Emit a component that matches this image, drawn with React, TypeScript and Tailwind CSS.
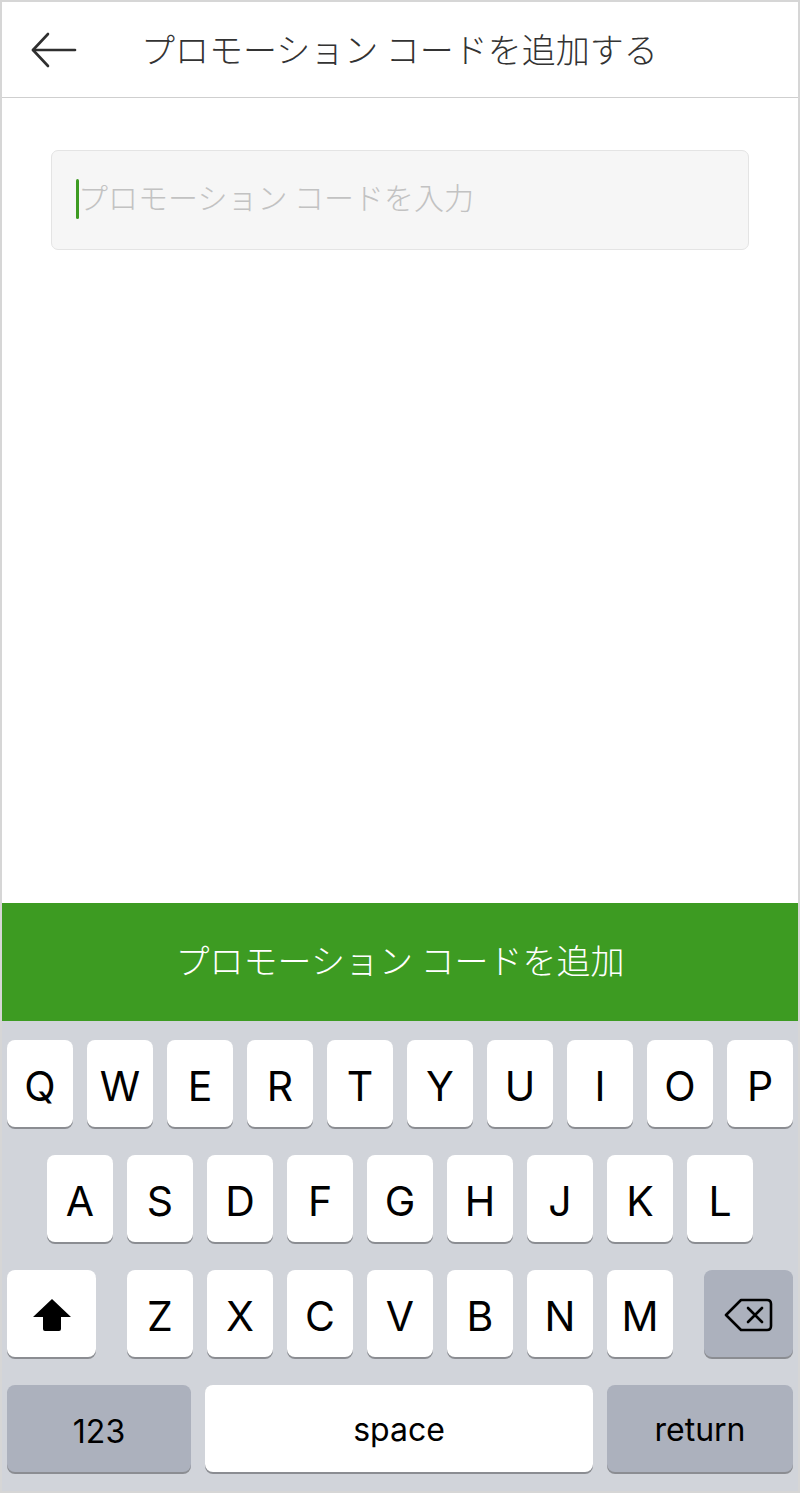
import React from "react";

const jp = { fontFamily: '"Noto Sans CJK JP", "Noto Sans", sans-serif' };
const latin = { fontFamily: 'Inter, "Liberation Sans", sans-serif' };

function Key({ label, className = "" }: { label: string; className?: string }) {
  return (
    <div
      className={`h-[87px] w-[66px] rounded-[8px] bg-white shadow-[0_2px_0_#8b8d92] flex items-center justify-center text-[41px] text-black pt-[6px] ${className}`}
      style={latin}
    >
      {label}
    </div>
  );
}

export default function App() {
  const row1 = ["Q", "W", "E", "R", "T", "Y", "U", "I", "O", "P"];
  const row2 = ["A", "S", "D", "F", "G", "H", "J", "K", "L"];
  const row3 = ["Z", "X", "C", "V", "B", "N", "M"];
  return (
    <div className="w-[800px] h-[1493px] border-2 border-[#d6d6d6] flex flex-col bg-white overflow-hidden">
      {/* Header */}
      <div className="h-[96px] shrink-0 border-b border-[#cfcfcf] flex items-center">
        <div className="w-[139px] pl-[28px] flex items-center">
          <svg width="48" height="38" viewBox="0 0 48 38" fill="none" stroke="#2f2f2f" strokeWidth="2.6" strokeLinecap="round" strokeLinejoin="round">
            <path d="M3 19 H45" />
            <path d="M18 3 L3 19 L18 35" />
          </svg>
        </div>
        <div className="text-[34px] text-[#333] font-light pb-[2px]" style={jp}>
          プロモーション コードを追加する
        </div>
      </div>

      {/* Body */}
      <div className="flex-1 px-[49px] pt-[52px]">
        <div className="h-[100px] rounded-[7px] border border-[#e4e4e4] bg-[#f6f6f6] flex items-center pl-[24px]">
          <div className="w-[3px] h-[40px] rounded-full bg-[#3d9b22] -mt-[2px]" />
          <div className="text-[30px] text-[#c2c2c2] font-light -ml-[1px] pb-[8px]" style={jp}>
            プロモーション コードを入力
          </div>
        </div>
      </div>

      {/* Button */}
      <div className="h-[118px] shrink-0 bg-[#3d9b22] flex items-center justify-center">
        <div className="text-[34px] text-white font-light pb-[5px]" style={jp}>
          プロモーション コードを追加
        </div>
      </div>

      {/* Keyboard */}
      <div className="h-[470px] shrink-0 bg-[#d1d4da] px-[5px] pt-[19px] flex flex-col gap-[28px]">
        <div className="flex gap-[14px]">
          {row1.map((k) => (
            <Key key={k} label={k} />
          ))}
        </div>
        <div className="flex gap-[14px] pl-[40px]">
          {row2.map((k) => (
            <Key key={k} label={k} />
          ))}
        </div>
        <div className="flex">
          <div className="h-[87px] w-[89px] rounded-[8px] bg-white shadow-[0_2px_0_#8b8d92] flex items-center justify-center pt-[2px]">
            <svg width="42" height="36" viewBox="0 0 42 36">
              <path d="M21 2 L40 20 H30 V32 Q30 34 28 34 H14 Q12 34 12 32 V20 H2 Z" fill="#000" />
            </svg>
          </div>
          <div className="flex gap-[14px] ml-[31px]">
            {row3.map((k) => (
              <Key key={k} label={k} />
            ))}
          </div>
          <div className="ml-[31px] h-[87px] w-[89px] rounded-[8px] bg-[#acb1bd] shadow-[0_2px_0_#8b8d92] flex items-center justify-center pt-[2px]">
            <svg width="50" height="36" viewBox="0 0 50 36" fill="none" stroke="#000" strokeWidth="2.6" strokeLinejoin="round" strokeLinecap="round">
              <path d="M17 3 H43 Q47 3 47 7 V29 Q47 33 43 33 H17 L2 18 Z" />
              <path d="M24 11 L38 25 M38 11 L24 25" />
            </svg>
          </div>
        </div>
        <div className="flex gap-[14px]">
          <div className="h-[87px] w-[184px] rounded-[8px] bg-[#acb1bd] shadow-[0_2px_0_#8b8d92] flex items-center justify-center text-[32px] text-black pt-[6px]" style={latin}>
            123
          </div>
          <div className="h-[87px] w-[388px] rounded-[8px] bg-white shadow-[0_2px_0_#8b8d92] flex items-center justify-center text-[32px] text-black pt-[2px]" style={latin}>
            space
          </div>
          <div className="h-[87px] w-[186px] rounded-[8px] bg-[#acb1bd] shadow-[0_2px_0_#8b8d92] flex items-center justify-center text-[32px] text-black pt-[2px]" style={latin}>
            return
          </div>
        </div>
      </div>
    </div>
  );
}
